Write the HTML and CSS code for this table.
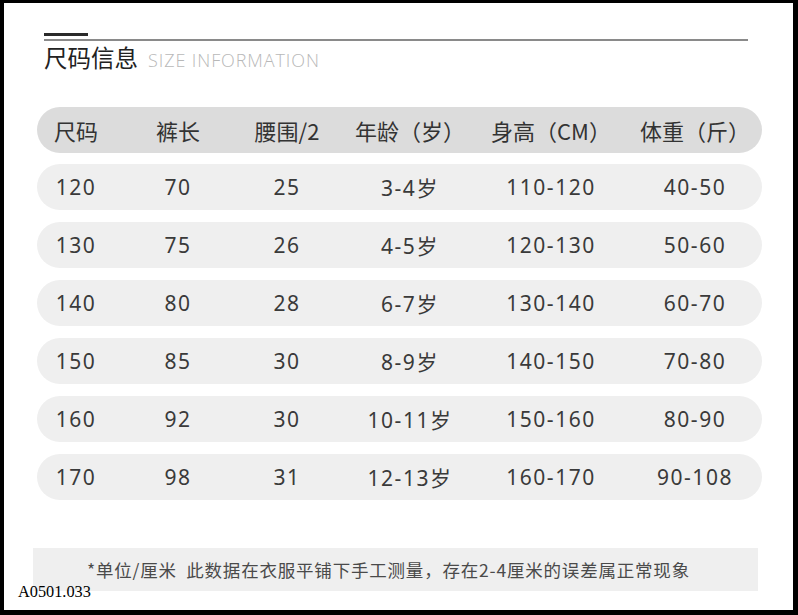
FILE: index.html
```html
<!DOCTYPE html>
<html lang="zh">
<head>
<meta charset="utf-8">
<title>尺码信息</title>
<link rel="stylesheet" href="styles.css">
</head>
<body>
<div class="frame">
  <div class="head">
    <div class="bar-thick"></div>
    <div class="bar-thin"></div>
    <h1 class="title"><span class="cn">尺码信息</span><span class="en">SIZE INFORMATION</span></h1>
  </div>
  <div class="table">
    <div class="row row-head">
      <div class="c">尺码</div><div class="c">裤长</div><div class="c">腰围/2</div><div class="c">年龄（岁）</div><div class="c">身高（CM）</div><div class="c c6">体重（斤）</div>
    </div>
    <div class="row">
      <div class="c">120</div><div class="c">70</div><div class="c">25</div><div class="c">3-4岁</div><div class="c">110-120</div><div class="c c6">40-50</div>
    </div>
    <div class="row">
      <div class="c">130</div><div class="c">75</div><div class="c">26</div><div class="c">4-5岁</div><div class="c">120-130</div><div class="c c6">50-60</div>
    </div>
    <div class="row">
      <div class="c">140</div><div class="c">80</div><div class="c">28</div><div class="c">6-7岁</div><div class="c">130-140</div><div class="c c6">60-70</div>
    </div>
    <div class="row">
      <div class="c">150</div><div class="c">85</div><div class="c">30</div><div class="c">8-9岁</div><div class="c">140-150</div><div class="c c6">70-80</div>
    </div>
    <div class="row">
      <div class="c">160</div><div class="c">92</div><div class="c">30</div><div class="c">10-11岁</div><div class="c">150-160</div><div class="c c6">80-90</div>
    </div>
    <div class="row">
      <div class="c">170</div><div class="c">98</div><div class="c">31</div><div class="c">12-13岁</div><div class="c">160-170</div><div class="c c6">90-108</div>
    </div>
  </div>
  <div class="note">*单位/厘米&nbsp;&nbsp;此数据在衣服平铺下手工测量，存在2-4厘米的误差属正常现象</div>
  <div class="code">A0501.033</div>
</div>
</body>
</html>
```
FILE: styles.css
```css
html, body {
  margin: 0;
  padding: 0;
  background: #000;
}
body {
  width: 798px;
  height: 615px;
  overflow: hidden;
}
.frame {
  position: relative;
  margin: 3px 5px 0 4px;
  width: 789px;
  height: 607px;
  background: #fff;
  font-family: "Noto Sans CJK SC", "Noto Sans", sans-serif;
  color: #333;
  overflow: hidden;
  display: flow-root;
}
.head {
  padding-left: 40px;
  padding-top: 30px;
}
.bar-thick {
  width: 44px;
  height: 3px;
  background: #2a2a2a;
}
.bar-thin {
  width: 704px;
  height: 2px;
  margin-top: 3px;
  background: #8a8a8a;
}
.title {
  margin: 2px 0 0 0;
  font-weight: normal;
  line-height: 28px;
  display: flex;
  align-items: baseline;
}
.title .cn {
  font-size: 23.5px;
  color: #222;
}
.title .en {
  font-family: "Open Sans", "Noto Sans", sans-serif;
  font-size: 18px;
  font-weight: 300;
  color: #b8b8b8;
  margin-left: 10px;
  letter-spacing: 0.9px;
}
.table {
  margin: 33px 0 0 33px;
  width: 725px;
  display: flex;
  flex-direction: column;
  gap: 12px;
}
.row {
  display: grid;
  grid-template-columns: 78px 126px 92px 154px 128px 147px;
  height: 46px;
  align-items: center;
  background: #efefef;
  border-radius: 23px;
  font-family: "Noto Sans", "Noto Sans CJK SC", sans-serif;
  font-size: 21px;
  letter-spacing: 1.5px;
  color: #3a3a3a;
}
.row-head {
  background: #dcdcdc;
  margin-bottom: -1px;
  font-family: "Noto Sans CJK SC", "Noto Sans", sans-serif;
  font-size: 22px;
  letter-spacing: 0;
  color: #333;
}
.c {
  text-align: center;
  white-space: nowrap;
}
.c6 {
  padding-left: 13px;
}
.note {
  margin: 48px 0 0 29px;
  width: 725px;
  height: 43px;
  background: #efefef;
  font-size: 17.5px;
  line-height: 43px;
  color: #4a4a4a;
  padding-left: 54px;
  box-sizing: border-box;
  letter-spacing: 0.8px;
  white-space: nowrap;
}
.code {
  position: absolute;
  left: 14px;
  top: 579px;
  font-family: "Liberation Serif", serif;
  font-size: 16.3px;
  color: #000;
  line-height: 20px;
}
```
